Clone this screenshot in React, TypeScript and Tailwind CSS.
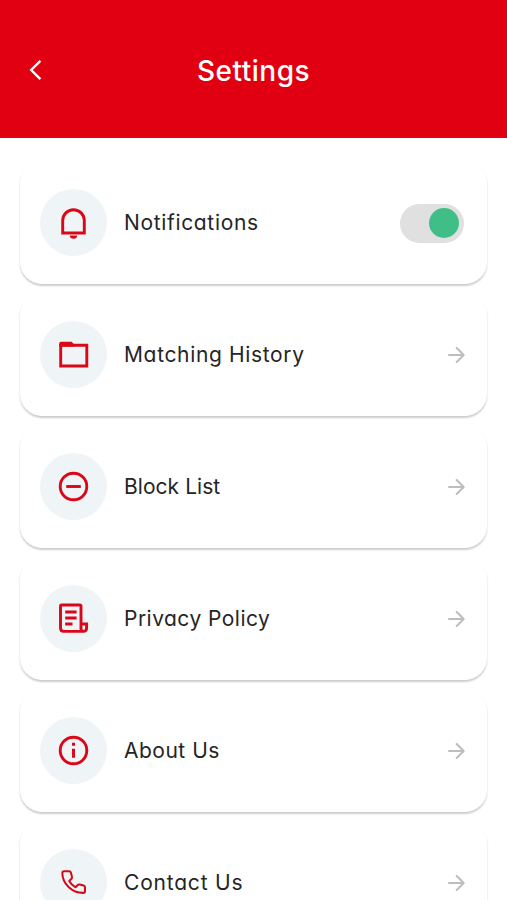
import type { ReactNode } from "react";

const stroke = { fill: "none", stroke: "#da0718", strokeWidth: 2.9 };

const BellIcon = () => (
  <svg width="34" height="34" viewBox="0.5 1 34 34" {...stroke}>
    <path d="M6.2 28V15.5a10.8 10.8 0 0 1 21.6 0V28Z" />
    <path d="M13.4 30.5h7.2a3.6 3.3 0 0 1-7.2 0Z" fill="#da0718" stroke="none" />
  </svg>
);

const FolderIcon = () => (
  <svg width="34" height="34" viewBox="0.5 0.5 34 34" {...stroke}>
    <path d="M4.2 7.7h26.1v20.8H4.2z" />
    <path d="M2.8 9V6q0-1.8 1.8-1.8h10.5l3.2 3.2V9Z" fill="#da0718" stroke="none" />
  </svg>
);

const MinusIcon = () => (
  <svg width="34" height="34" viewBox="0.5 0.5 34 34" {...stroke}>
    <circle cx="17" cy="17" r="13.3" />
    <path d="M9.7 17h14.6" />
  </svg>
);

const PolicyIcon = () => (
  <svg width="34" height="34" viewBox="0.5 1 34 34" {...stroke}>
    <path d="M24.5 22V5.2q0-1.2-1.2-1.2H5.2Q4 4 4 5.2V27q0 3.4 3.4 3.4h19.4q3.3 0 3.3-3.3V23h-5.6v4.5q0 2.9 2.3 2.9" />
    <path d="M8.7 11h11.4M8.7 17h11.4M8.7 23H16" />
  </svg>
);

const InfoIcon = () => (
  <svg width="34" height="34" viewBox="0.5 0.5 34 34" {...stroke}>
    <circle cx="17" cy="17" r="13.3" />
    <path d="M17 15.2v9M17 9.3v2.9" strokeWidth="3" />
  </svg>
);

const PhoneIcon = () => (
  <svg width="33" height="33" viewBox="0 0 34 34" {...stroke} strokeWidth="2.1" strokeLinejoin="round">
    <path d="M7.3 5.4h5.1q1.6 0 2 1.5l1 4.3q.3 1.3-.7 2.2l-2.1 2q2.3 4.2 6.5 6.5l2-2.1q1-1 2.3-.7l4 .9q1.4.4 1.4 1.8v4.1q0 1.8-1.8 1.8C15.2 27.7 5.6 18.2 5.5 7.2q0-1.8 1.8-1.8Z" />
  </svg>
);

const ArrowIcon = () => (
  <svg width="18" height="18" viewBox="-0.5 0 18 18" fill="none" stroke="#bdbdbd" strokeWidth="2" strokeLinecap="round" strokeLinejoin="round">
    <path d="M1.5 9h14.3M9.2 2l7 7-7 7" />
  </svg>
);

const Toggle = () => (
  <span className="mr-px mt-px flex h-[39px] w-16 items-center justify-end rounded-full bg-[#e0e0e0] pr-[5px]">
    <span className="size-[30px] rounded-full bg-[#3fbf87]" />
  </span>
);

type Item = { label: string; tracking: string; icon: ReactNode; toggle?: boolean };

const items: Item[] = [
  { label: "Notifications", tracking: "tracking-[0.66px]", icon: <BellIcon />, toggle: true },
  { label: "Matching History", tracking: "tracking-[0.65px]", icon: <FolderIcon /> },
  { label: "Block List", tracking: "tracking-[0.05px]", icon: <MinusIcon /> },
  { label: "Privacy Policy", tracking: "tracking-[0.47px]", icon: <PolicyIcon /> },
  { label: "About Us", tracking: "tracking-[0.5px]", icon: <InfoIcon /> },
  { label: "Contact Us", tracking: "tracking-[0.8px]", icon: <PhoneIcon /> },
];

export default function App() {
  return (
    <div className="flex h-[900px] w-full flex-col overflow-hidden bg-white font-['Inter','Noto_Sans',sans-serif] [font-feature-settings:'cv11']">
      <header className="grid h-[138px] shrink-0 grid-cols-[1fr_auto_1fr] items-center bg-[#e00011] pt-0.5 text-white">
        <svg className="ml-7" width="14" height="22" viewBox="0 0 14 22" fill="none" stroke="currentColor" strokeWidth="2.4">
          <path d="M12.4 1.8 3.2 11l9.2 9.2" />
        </svg>
        <h1 className="pt-0.5 text-[28px] font-medium leading-none tracking-[0.5px]">Settings</h1>
      </header>
      <main className="flex flex-col gap-[9px] px-5 pt-[23px]">
        {items.map((item) => (
          <section
            key={item.label}
            className="flex h-[123px] shrink-0 items-center rounded-[22px] bg-white pl-5 pr-[22px] shadow-[0_2px_2px_rgba(0,0,0,0.2)]"
          >
            <span className="flex size-[67px] shrink-0 items-center justify-center rounded-full bg-[#eff4f7]">
              {item.icon}
            </span>
            <span className={"ml-[17px] flex-1 whitespace-nowrap pb-px text-[21px] leading-none text-[#252525] " + item.tracking}>
              {item.label}
            </span>
            {item.toggle ? <Toggle /> : <ArrowIcon />}
          </section>
        ))}
      </main>
    </div>
  );
}
